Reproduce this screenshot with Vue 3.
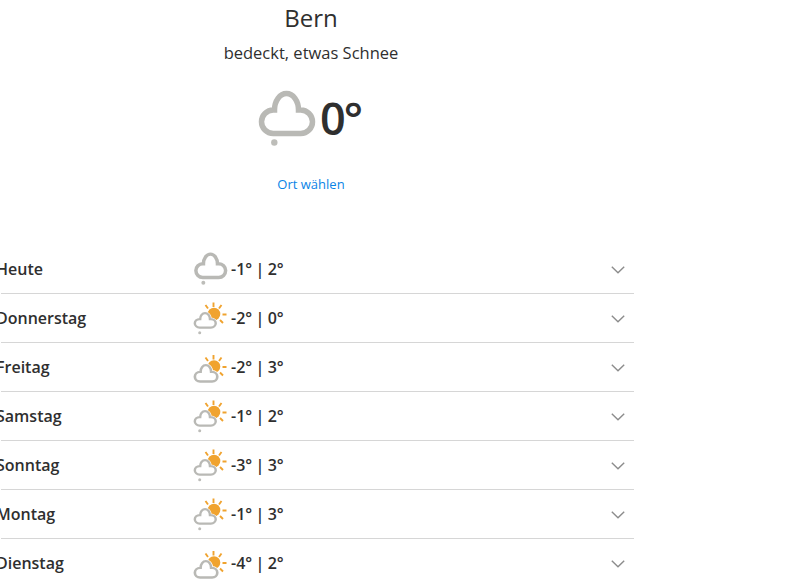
<script setup>
const cloud = 'M23.25 52.5H50.75A11.75 11.75 0 0 0 50.75 29H48.5A12 16.5 0 0 0 24.5 29H23.25A11.75 11.75 0 0 0 23.25 52.5Z'

// kinds: snow = cloud with flake, mix = sun + cloud + flake, sun = sun + big cloud
const days = [
  { name: 'Heute', low: -1, high: 2, kind: 'snow' },
  { name: 'Donnerstag', low: -2, high: 0, kind: 'mix' },
  { name: 'Freitag', low: -2, high: 3, kind: 'sun' },
  { name: 'Samstag', low: -1, high: 2, kind: 'mix' },
  { name: 'Sonntag', low: -3, high: 3, kind: 'mix' },
  { name: 'Montag', low: -1, high: 3, kind: 'mix' },
  { name: 'Dienstag', low: -4, high: 2, kind: 'sun' },
]
</script>

<template>
  <main class="page">
    <section class="current">
      <h1 class="city">Bern</h1>
      <p class="desc">bedeckt, etwas Schnee</p>
      <div class="now">
        <svg class="now-icon" viewBox="0 0 70 70">
          <path :d="cloud" class="cloud" />
          <circle cx="24.3" cy="61.5" r="3.2" class="flake" />
        </svg>
        <span class="now-temp">0°</span>
      </div>
      <a class="pick" href="#">Ort wählen</a>
    </section>

    <ul class="days">
      <li v-for="d in days" :key="d.name" class="day">
        <span class="day-name">{{ d.name }}</span>
        <svg v-if="d.kind === 'snow'" class="day-icon" viewBox="-2 2 72 72">
          <path :d="cloud" class="cloud" />
          <circle cx="24.3" cy="61.5" r="3.4" class="flake" />
        </svg>
        <svg v-else class="day-icon" viewBox="0 0 42 42">
          <g :transform="d.kind === 'sun' ? 'translate(0 3.5)' : ''">
            <circle cx="26" cy="17" r="6.3" class="sun" />
            <path class="rays" d="M25.5 5.5V10M17.5 8L20 11.5M33.5 8L31 11.5M34.5 17.5H38.5M32 23L35 26" />
          </g>
          <g v-if="d.kind === 'mix'" transform="translate(2.1 11.7) scale(.41 .36)">
            <path :d="cloud" class="cloud-gap" />
            <path :d="cloud" class="cloud" />
          </g>
          <g v-else transform="translate(1.8 14) scale(.44 .41)">
            <path :d="cloud" class="cloud-gap" />
            <path :d="cloud" class="cloud" />
          </g>
          <circle v-if="d.kind === 'mix'" cx="11.7" cy="35.7" r="1.5" class="flake" />
        </svg>
        <span class="day-temp">{{ d.low }}° | {{ d.high }}°</span>
        <svg class="chev" viewBox="0 0 14 8">
          <path d="M.8.8L7 6.8L13.2.8" />
        </svg>
      </li>
    </ul>
  </main>
</template>

<style scoped>
.page { width: 634px; height: 579px; overflow: hidden; font-family: "Open Sans", "Noto Sans", sans-serif; color: #2f2f2f; }
.current { width: 622px; display: flex; flex-direction: column; align-items: center; }
.city { margin: 2px 0 0; font-size: 24px; line-height: 32px; font-weight: 400; }
.desc { margin: 7px 0 0; font-size: 16.5px; line-height: 24px; }
.now { display: flex; align-items: center; margin-top: 16px; height: 70px; }
.now-icon { width: 70px; height: 70px; }
.now-temp { padding-top: 3px; font-size: 45px; line-height: 70px; font-weight: 600; letter-spacing: -2px; width: 52px; }
.pick { margin-top: 23px; font-size: 13px; line-height: 20px; color: #0a84e6; text-decoration: none; }

.days { list-style: none; margin: 51px 0 0 1px; padding: 0; }
.day { display: flex; align-items: center; height: 48px; border-bottom: 1px solid #d6d6d6; }
.day-name { width: 192px; margin-left: -5px; font-size: 16px; font-weight: 600; }
.day-icon { width: 42px; height: 42px; flex-shrink: 0; }
.day-temp { margin-left: 1px; font-size: 16px; font-weight: 600; word-spacing: -.8px; }
.chev { width: 14px; height: 8px; margin: 2px 9px 0 auto; }
.chev path { fill: none; stroke: #8c8c8c; stroke-width: 1.4; }

.cloud { fill: none; stroke: #b9b9b5; stroke-width: 6; }
.cloud-gap { fill: #fff; stroke: #fff; stroke-width: 9; }
.now-icon .cloud { stroke-width: 5.5; }
.flake { fill: #bdbdb9; }
.sun { fill: #f0a32f; }
.rays { fill: none; stroke: #f0a32f; stroke-width: 1.9; }
</style>
